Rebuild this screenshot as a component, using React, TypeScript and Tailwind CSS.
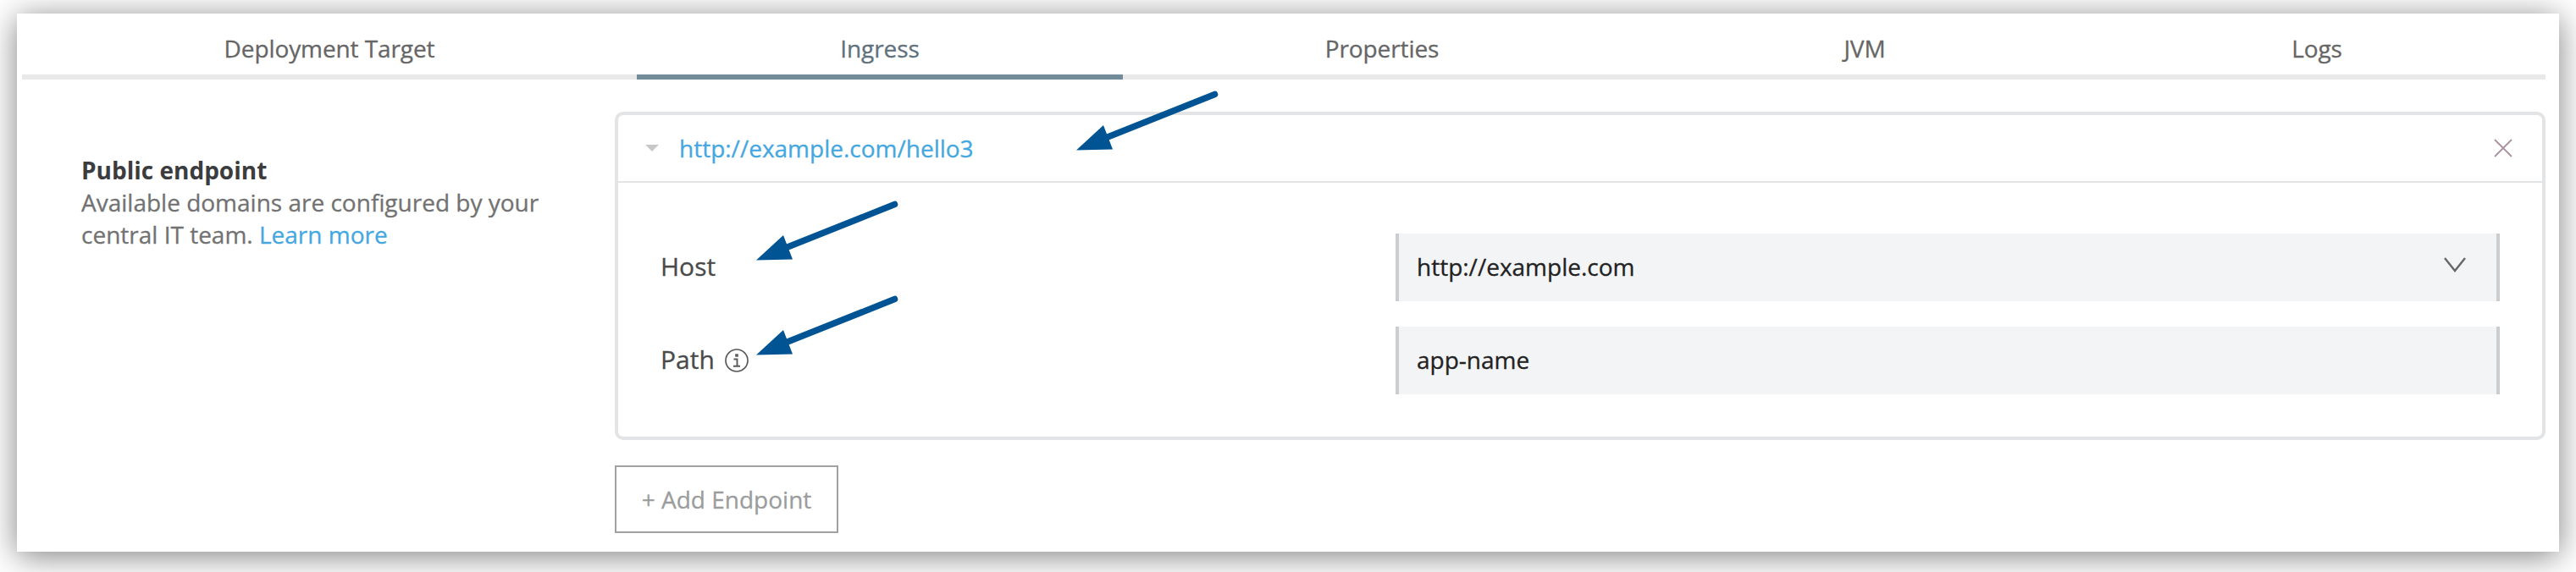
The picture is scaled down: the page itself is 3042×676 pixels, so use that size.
import type { ReactNode } from 'react';

const tabs = [
  { label: 'Deployment Target', width: 'w-[726px]' },
  { label: 'Ingress', width: 'w-[574px]', active: true },
  { label: 'Properties', width: 'w-[612px]' },
  { label: 'JVM', width: 'w-[528px]' },
  { label: 'Logs', width: 'w-[540px]' },
];

function Arrow({ className }: { className: string }) {
  return (
    <svg className={`absolute h-[72px] w-[170px] ${className}`} viewBox="0 0 170 72" fill="none">
      <path d="M163.5 5.5 32 58" stroke="#005493" strokeWidth="7.5" strokeLinecap="round" />
      <path d="M0 71.5 32 42 43 70.5Z" fill="#005493" />
    </svg>
  );
}

function Field({ label, icon, value, children }: { label: string; icon?: ReactNode; value: string; children?: ReactNode }) {
  return (
    <div className="flex h-20 items-center">
      <div className="flex w-[868px] items-center text-[30px] text-[#4a4a4a]">
        <span className="pb-[3px]">{label}</span>
        {icon}
      </div>
      <div className="flex h-20 flex-1 items-center justify-between border-x-4 border-[#cbcdcf] bg-[#f3f4f6] pl-[21px] pr-9 text-[#222]">
        <span className="pb-0.5">{value}</span>
        {children}
      </div>
    </div>
  );
}

export default function App() {
  return (
    <div className="h-[676px] w-[3042px] overflow-hidden bg-white px-5 pt-4 font-['Open_Sans',sans-serif] text-[28px] leading-[38px] [-webkit-text-stroke:0.3px]">
      <div className="relative h-[636px] w-[3002px] bg-white shadow-[0_5px_36px_rgba(0,0,0,0.5)]">
        <nav className="mx-1.5 flex w-[2980px] tracking-[-0.1px] text-[#666]">
          {tabs.map((t) => (
            <div
              key={t.label}
              className={`${t.width} h-[78px] border-b-6 pt-[22px] text-center ${t.active ? 'border-[#728c99] text-[#5f727c]' : 'border-[#e9e9e9]'}`}
            >
              {t.label}
            </div>
          ))}
        </nav>
        <div className="flex pt-[38px]">
          <aside className="w-[706px] pl-[76px] pt-[50px] text-[#727272]">
            <h2 className="font-bold text-[#3b3c3d] [-webkit-text-stroke:0]">Public endpoint</h2>
            <p>
              Available domains are configured by your
              <br />
              central IT team. <a className="text-[#45a7df]">Learn more</a>
            </p>
          </aside>
          <main>
            <section className="h-[388px] w-[2280px] rounded-[10px] border-4 border-[#e3e4e5]">
              <header className="flex h-20 items-center border-b-2 border-[#e3e4e5] pl-8 pr-[35px]">
                <svg className="h-2 w-4" viewBox="0 0 16 8">
                  <path d="M0 0h16L8 8Z" fill="#c8c8c8" />
                </svg>
                <span className="ml-6 flex-1 text-[#45a7df]">http://example.com/hello3</span>
                <svg className="h-[22px] w-[22px]" viewBox="0 0 22 22">
                  <path d="M1 1 21 21M21 1 1 21" stroke="#ac91a0" strokeWidth="1.8" />
                </svg>
              </header>
              <div className="flex flex-col gap-[30px] pl-[50px] pr-[50px] pt-[60px]">
                <Field label="Host" value="http://example.com">
                  <svg className="mb-[7px] h-[18px] w-[26px]" viewBox="0 0 26 18" fill="none">
                    <path d="M1 1 13 16 25 1" stroke="#666" strokeWidth="2.4" />
                  </svg>
                </Field>
                <Field
                  label="Path"
                  icon={
                    <svg className="ml-3 h-7 w-7" viewBox="0 0 28 28" fill="none">
                      <circle cx="14" cy="14" r="13" stroke="#5a5a5a" strokeWidth="1.7" />
                      <path d="M12.2 6.3h3.6v3.4h-3.6z" fill="#5a5a5a" />
                      <path d="M10.5 12.5h4v8M10 20.8h8" stroke="#5a5a5a" strokeWidth="1.9" />
                    </svg>
                  }
                  value="app-name"
                />
              </div>
            </section>
            <button className="mt-[30px] flex h-20 w-[264px] items-center justify-center border-2 border-[#a0a2a2] text-[#9b9d9d]">
              + Add Endpoint
            </button>
          </main>
        </div>
        <Arrow className="left-[1251px] top-[90px]" />
        <Arrow className="left-[873px] top-[220px]" />
        <Arrow className="left-[873px] top-[332px]" />
      </div>
    </div>
  );
}
